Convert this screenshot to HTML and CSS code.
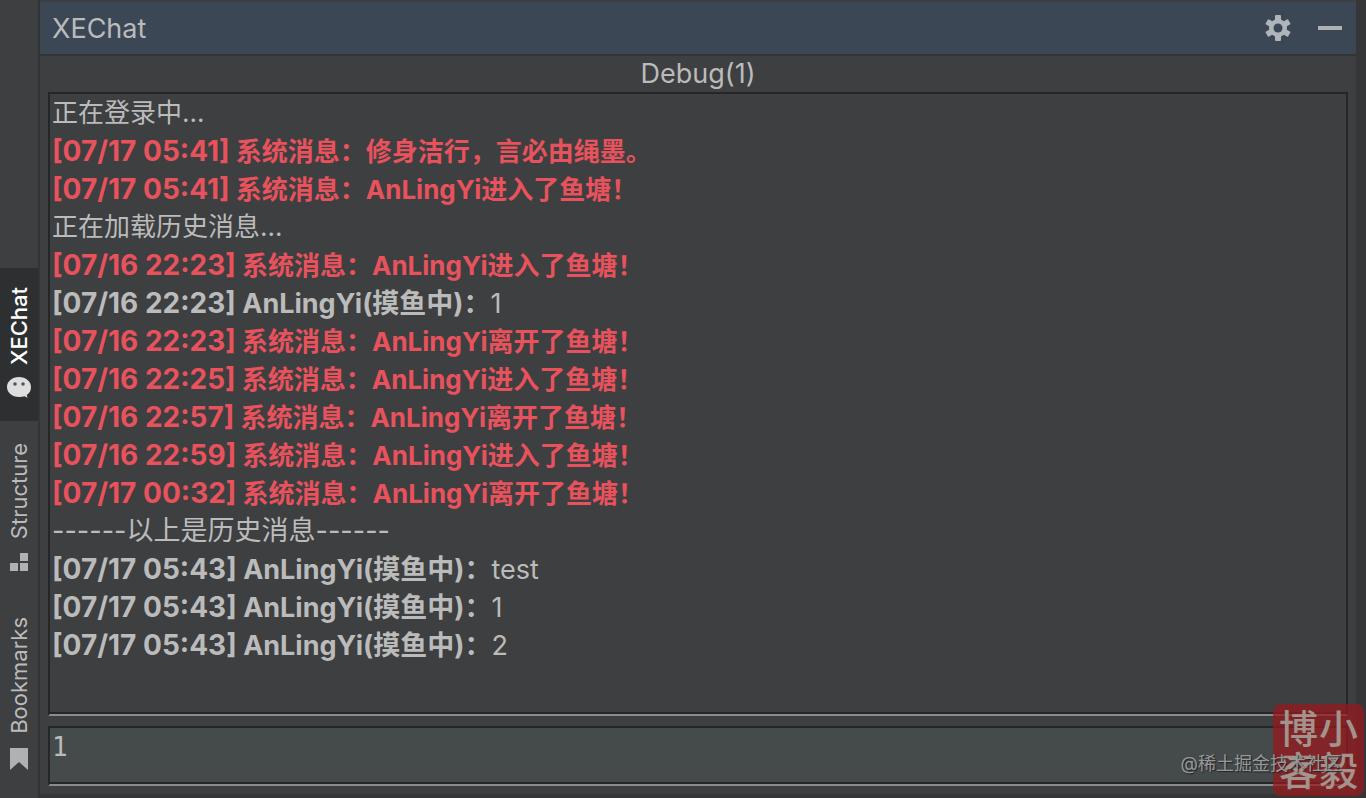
FILE: index.html
```html
<!DOCTYPE html>
<html lang="zh-CN">
<head>
  <meta charset="UTF-8">
  <meta name="viewport" content="width=device-width, initial-scale=1.0">
  <title>XEChat</title>
  <link rel="stylesheet" href="styles.css">
</head>
<body>
  <nav class="sidebar">
    <button type="button" class="tab active">
      <span class="tab-name">XEChat</span>
      <svg class="tab-icon" width="26" height="24" viewBox="0 0 26 24">
        <path d="M13 1C6 1 1 5.500 1 11s5 10 12 10c2 0 4-.3 5.500-.8l3 1.600-.7-2.800C24 17 25 14 25 11 25 5.500 20 1 13 1z" fill="#dedede"/>
        <circle cx="9" cy="8" r="1.800" fill="#555"/>
        <circle cx="17" cy="8" r="1.800" fill="#555"/>
      </svg>
    </button>
    <button type="button" class="tab">
      <span class="tab-name">Structure</span>
      <svg class="tab-icon" width="18" height="18" viewBox="0 0 18 18" fill="#afb1b3">
        <path d="M10 0h8v8h-8zM0 10h8v8H0zM10 10h8v8h-8z"/>
      </svg>
    </button>
    <button type="button" class="tab">
      <span class="tab-name">Bookmarks</span>
      <svg class="tab-icon" width="18" height="22" viewBox="0 0 18 22" fill="#afb1b3">
        <path d="M0 0h18v22l-9-8-9 8z"/>
      </svg>
    </button>
  </nav>

  <main class="panel">
    <header class="titlebar">
      <h1>XEChat</h1>
      <button type="button" class="tool" aria-label="Settings">
        <svg width="28" height="28" viewBox="0 0 28 28">
          <g fill="#afb4ba">
            <circle cx="14" cy="14" r="9"/>
            <rect x="11" y="1" width="6" height="26" rx="1"/>
            <rect x="11" y="1" width="6" height="26" rx="1" transform="rotate(60 14 14)"/>
            <rect x="11" y="1" width="6" height="26" rx="1" transform="rotate(120 14 14)"/>
          </g>
          <circle cx="14" cy="14" r="4.500" fill="#3c4756"/>
        </svg>
      </button>
      <button type="button" class="tool" aria-label="Hide">
        <svg width="24" height="4" viewBox="0 0 24 4"><path d="M0 0h24v4H0z" fill="#afb1b3"/></svg>
      </button>
    </header>

    <section class="chat">
      <h2>Debug(1)</h2>
      <div class="log">
        <p>正在登录中...</p>
        <p class="system"><time>[07/17 05:41]</time> 系统消息：修身洁行，言必由绳墨。</p>
        <p class="system"><time>[07/17 05:41]</time> 系统消息：AnLingYi进入了鱼塘！</p>
        <p>正在加载历史消息...</p>
        <p class="system"><time>[07/16 22:23]</time> 系统消息：AnLingYi进入了鱼塘！</p>
        <p class="user"><b><time>[07/16 22:23]</time> AnLingYi(摸鱼中)：</b>1</p>
        <p class="system"><time>[07/16 22:23]</time> 系统消息：AnLingYi离开了鱼塘！</p>
        <p class="system"><time>[07/16 22:25]</time> 系统消息：AnLingYi进入了鱼塘！</p>
        <p class="system"><time>[07/16 22:57]</time> 系统消息：AnLingYi离开了鱼塘！</p>
        <p class="system"><time>[07/16 22:59]</time> 系统消息：AnLingYi进入了鱼塘！</p>
        <p class="system"><time>[07/17 00:32]</time> 系统消息：AnLingYi离开了鱼塘！</p>
        <p class="divider">------以上是历史消息------</p>
        <p class="user"><b><time>[07/17 05:43]</time> AnLingYi(摸鱼中)：</b>test</p>
        <p class="user"><b><time>[07/17 05:43]</time> AnLingYi(摸鱼中)：</b>1</p>
        <p class="user"><b><time>[07/17 05:43]</time> AnLingYi(摸鱼中)：</b>2</p>
      </div>
      <textarea class="message" aria-label="Message" spellcheck="false">1</textarea>
    </section>
  </main>

  <div class="seal"><span>博</span><span>小</span><span>客</span><span>毅</span></div>
  <div class="watermark">@稀土掘金技术社区</div>
</body>
</html>
```
FILE: styles.css
```css
* {
  box-sizing: border-box;
}
body {
  margin: 0;
  min-height: 100vh;
  display: flex;
  padding-right: 10px;
  background: #353637;
  color: #bbbbbb;
  font-family: Inter, "Noto Sans CJK SC", sans-serif;
  font-size: 26px;
  overflow: hidden;
}
button {
  border: none;
  padding: 0;
  background: none;
  color: inherit;
  font: inherit;
}

/* left tool window bar */
.sidebar {
  width: 40px;
  display: flex;
  flex-direction: column;
  padding-top: 268px;
  background: #3d3f41;
  border-right: 2px solid #323435;
}
.tab {
  display: flex;
  flex-direction: column;
  align-items: center;
  gap: 14px;
  padding: 22px 0 24px;
  font-size: 22px;
}
.tab.active {
  gap: 11px;
  padding: 19px 0 21px;
  background: #2d2f30;
  color: #ffffff;
  font-weight: 500;
}
.tab-name {
  writing-mode: vertical-rl;
  transform: rotate(180deg);
  line-height: 24px;
}
.tab-icon {
  display: block;
}

/* tool window */
.panel {
  flex: 1;
  display: flex;
  flex-direction: column;
  margin-bottom: 4px;
  padding-top: 2px;
  background: #3d3f41;
}
.titlebar {
  display: flex;
  align-items: center;
  gap: 26px;
  height: 54px;
  padding: 0 14px 0 12px;
  background: #3c4756;
  border-bottom: 2px solid #323435;
}
.titlebar h1 {
  flex: 1;
  margin: 0;
  font-size: 27px;
  font-weight: 400;
}
.tool {
  display: flex;
}
.chat {
  flex: 1;
  display: flex;
  flex-direction: column;
  padding: 0 8px 8px;
}
.chat h2 {
  margin: 0;
  font-size: 27px;
  font-weight: 400;
  line-height: 36px;
  text-align: center;
}
.log, .message {
  border: 2px solid #242627;
  border-bottom: 2px solid #8a8c8d;
}
.log {
  flex: 1;
  padding: 0 2px;
  box-shadow: inset 0 -2px #242627;
}
.log p {
  height: 38px;
  margin: 0;
  line-height: 38px;
}
.log time {
  font-size: 28px;
}
.log .user, .log .divider {
  font-size: 27px;
}
.log .system {
  color: #e8525c;
  font-weight: 700;
}
.message {
  height: 60px;
  margin-top: 10px;
  padding: 0 2px;
  background: #454a4a;
  box-shadow: inset 0 -2px #242627;
  color: #bbbbbb;
  font-family: "DejaVu Sans Mono", monospace;
  font-size: 26px;
  line-height: 38px;
  resize: none;
  outline: none;
}

/* overlays in the corner */
.watermark {
  position: absolute;
  right: 24px;
  bottom: 20px;
  color: #96999a;
  font-size: 18px;
  line-height: 28px;
  text-shadow: 1px 1px 1px #222222;
}
.seal {
  position: absolute;
  right: 2px;
  bottom: 2px;
  display: grid;
  grid-template-columns: 40px 40px;
  justify-content: center;
  align-content: center;
  width: 91px;
  height: 92px;
  border-radius: 8px;
  background: rgba(150, 25, 30, 0.75);
  color: #a3938c;
  font-size: 39px;
  font-weight: 500;
  line-height: 42px;
  text-align: center;
}
```
